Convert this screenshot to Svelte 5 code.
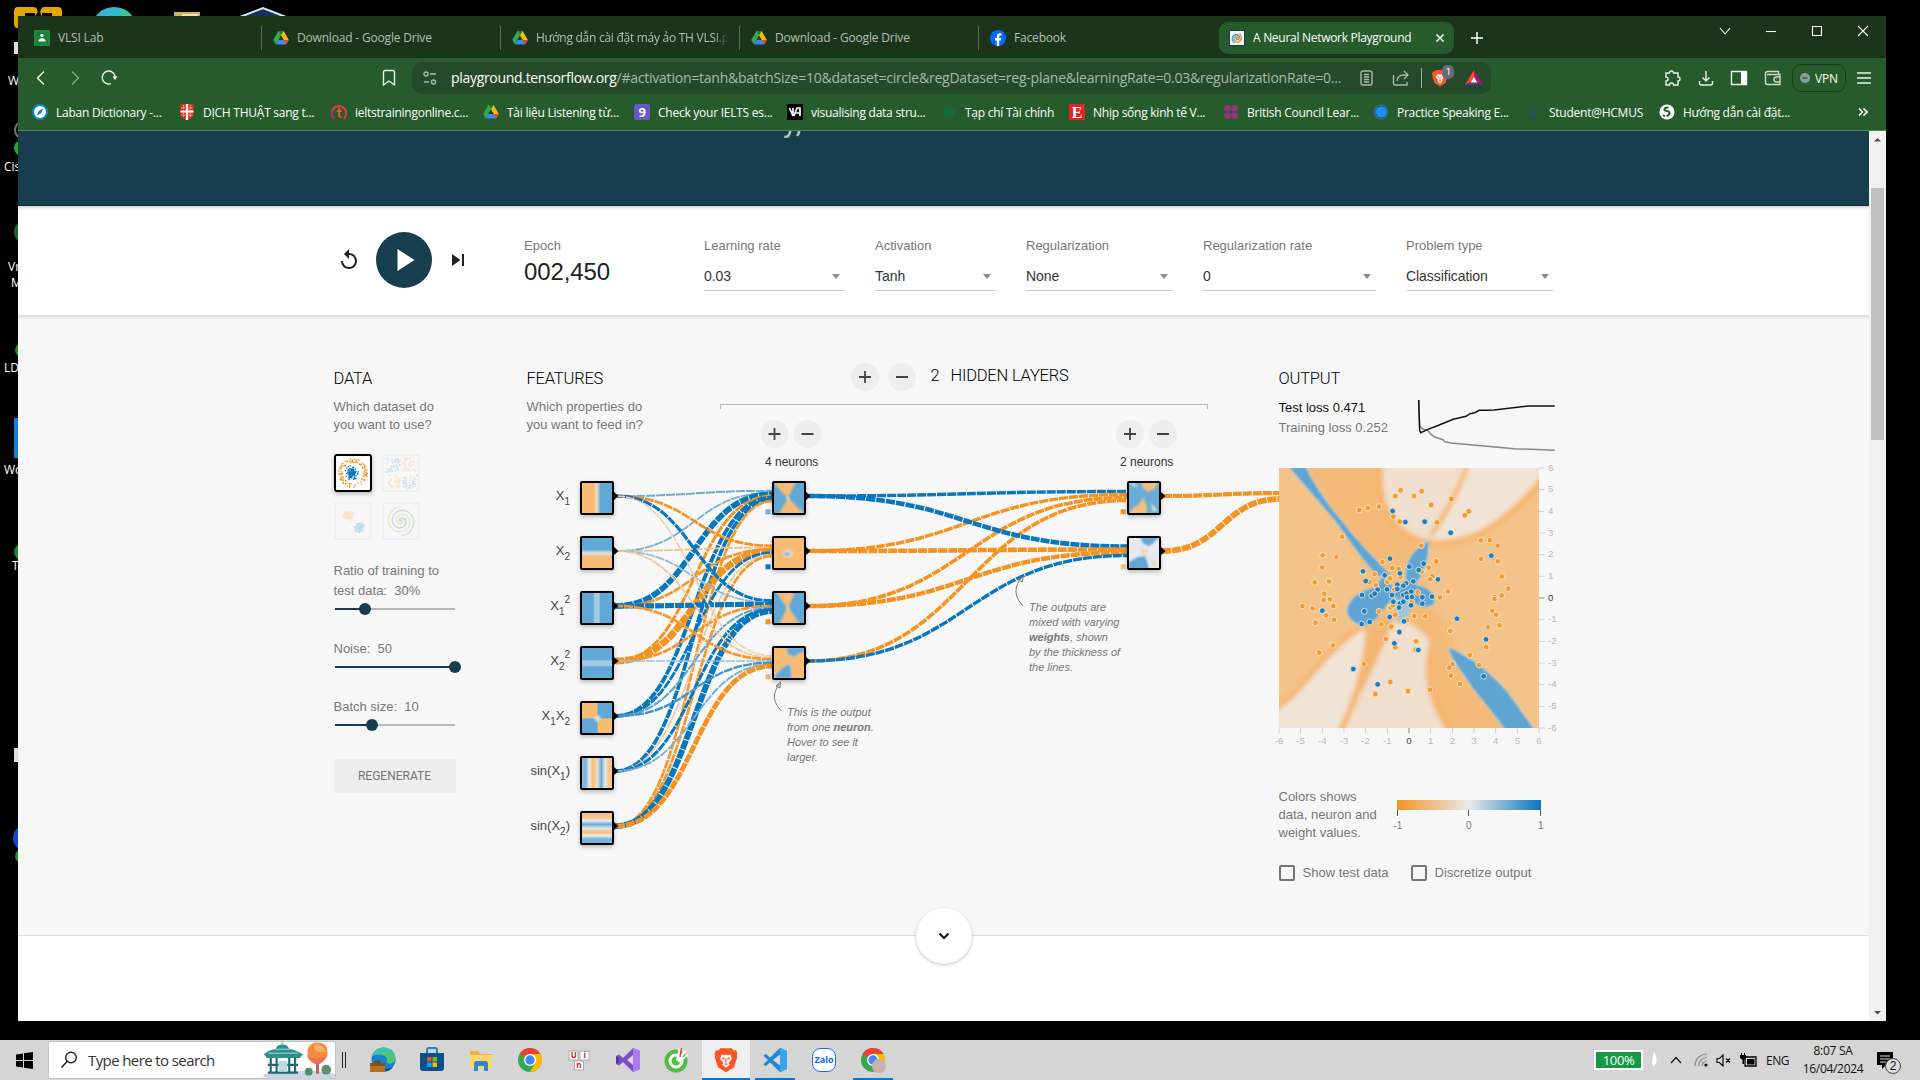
<script>
  function random(seed) {
    let s = seed;
    return () => {
      s = (s * 16807) % 2147483647;
      return s / 2147483647;
    };
  }

  const query =
    '/#activation=tanh&batchSize=10&dataset=circle&regDataset=reg-plane&learningRate=0.03&regularizationRate=0...';

  const tabs = [
    { icon: 'classroom', label: 'VLSI Lab' },
    { icon: 'drive', label: 'Download - Google Drive' },
    { icon: 'drive', label: 'Hướng dẫn cài đặt máy ảo TH VLSI.p', fade: true },
    { icon: 'drive', label: 'Download - Google Drive' },
    { icon: 'facebook', label: 'Facebook' }
  ];

  const bookmarks = [
    { icon: 'laban', label: 'Laban Dictionary -...', width: 147 },
    { icon: 'crest', label: 'DỊCH THUẬT sang t...', width: 152 },
    { icon: 'ielts', label: 'ieltstrainingonline.c...', width: 152 },
    { icon: 'drive', label: 'Tài liệu Listening từ...', width: 151 },
    { icon: 'nine', label: 'Check your IELTS es...', width: 153 },
    { icon: 'va', label: 'visualising data stru...', width: 154 },
    { icon: 'leaf', label: 'Tạp chí Tài chính', width: 128 },
    { icon: 'letterE', label: 'Nhịp sống kinh tế V...', width: 154 },
    { icon: 'council', label: 'British Council Lear...', width: 150 },
    { icon: 'swirl', label: 'Practice Speaking E...', width: 152 },
    { icon: 'student', label: 'Student@HCMUS', width: 134 },
    { icon: 'globe', label: 'Hướng dẫn cài đặt...', width: 140 }
  ];

  const selects = [
    { label: 'Learning rate', value: '0.03', width: 141 },
    { label: 'Activation', value: 'Tanh', width: 121 },
    { label: 'Regularization', value: 'None', width: 147 },
    { label: 'Regularization rate', value: '0', width: 173 },
    { label: 'Problem type', value: 'Classification', width: 148 }
  ];

  // Dataset thumbnails
  const ORANGE = '#f59322';
  const BLUE = '#0877bd';
  const r = random(77);
  const gauss = () => (r() + r() + r() + r() - 2) * 1.2;
  const thumbs = { circle: [], xor: [], gauss: [], spiral: [] };
  for (let i = 0; i < 110; i++) {
    const a = r() * Math.PI * 2;
    const d = 10.5 + r() * 4;
    thumbs.circle.push([19 + d * Math.cos(a), 19 + d * Math.sin(a), ORANGE]);
    thumbs.circle.push([18.5 + gauss() * 4, 19 + gauss() * 4, BLUE]);
  }
  for (let i = 0; i < 190; i++) {
    const x = r() * 14, y = r() * 14, q = i % 4;
    const cx = q % 2, cy = q > 1 ? 1 : 0;
    thumbs.xor.push([4 + x + cx * 17, 4 + y + cy * 17, cx === cy ? BLUE : ORANGE]);
    thumbs.gauss.push([14 + gauss() * 3, 13.5 + gauss() * 2.7, ORANGE]);
    thumbs.gauss.push([25 + gauss() * 3, 25.5 + gauss() * 3, BLUE]);
  }
  for (let i = 0; i < 150; i++) {
    const t = (i / 150) * 11;
    const d = 0.6 + (i / 150) * 14;
    thumbs.spiral.push([19 + d * Math.cos(t), 19 + d * Math.sin(t), ORANGE]);
    thumbs.spiral.push([19 - d * Math.cos(t), 19 - d * Math.sin(t), BLUE]);
  }

  // Network
  const rowY = (i) => 496 + 55 * i;
  const mix = (a, b, t) => Math.round(a + (b - a) * t);
  function weightColor(w) {
    const t = Math.min(1, Math.abs(w));
    const end = w < 0 ? [245, 147, 34] : [8, 119, 189];
    return `rgb(${mix(232, end[0], t)},${mix(234, end[1], t)},${mix(235, end[2], t)})`;
  }
  const weights1 = [
    [0.55, 0.5, 2.6, -1.1, 1.6, 1.5, -0.95],
    [-1, -0.45, -0.95, -3.2, 1, -0.4, -0.95],
    [1.2, 0.4, 2.3, -0.95, 0.6, 1.1, 2.7],
    [-0.3, -0.4, -0.95, 0.35, 0.75, 0.5, -2.1]
  ];
  const weights2 = [
    [1.35, -1.35, -1.45, -1.45],
    [2, -2, -1.9, 1.3]
  ];
  const links = [];
  function addLinks(matrix, x0, x1) {
    matrix.forEach((row, j) =>
      row.forEach((w, i) => {
        const y0 = rowY(i);
        const y1 = rowY(j) + ((i - (row.length - 1) / 2) / row.length) * 12;
        const xm = (x0 + x1) / 2;
        links.push({
          d: `M${x0},${y0}C${xm},${y0} ${xm},${y1} ${x1},${y1}`,
          color: weightColor(w),
          width: 1 + 1.8 * Math.abs(w)
        });
      })
    );
  }
  addLinks(weights1, 616, 772);
  addLinks(weights2, 808, 1127);
  addLinks([[-1.8, -2.7]], 1163, 1281);

  // Label runs: [text, vertical shift, small]
  const features = [
    [['X', 0, 0], ['1', 5, 1]],
    [['X', 0, 0], ['2', 5, 1]],
    [['X', 0, 0], ['1', 5, 1], ['2', -12, 1]],
    [['X', 0, 0], ['2', 5, 1], ['2', -12, 1]],
    [['X', 0, 0], ['1', 5, 1], ['X', -5, 0], ['2', 5, 1]],
    [['sin(X', 0, 0], ['1', 5, 1], [')', -5, 0]],
    [['sin(X', 0, 0], ['2', 5, 1], [')', -5, 0]]
  ];
  const biases = [
    [765.5, 0, '#7bb1d8'], [765.5, 1, BLUE], [765.5, 2, ORANGE], [765.5, 3, '#f1b36e'],
    [1120.7, 0, ORANGE], [1120.7, 1, '#eec08c']
  ];
  const buttons = [[774.5, 434], [1130, 434]];

  // Output heatmap: coordinates in thirds of a pixel
  const orangeDots = [
    [422,301],[406,318],[462,318],[485,304],[574,327],[298,360],[324,354],[357,350],[513,345],[626,364],
    [615,376],[400,380],[419,395],[531,397],[246,440],[484,467],[662,451],[690,451],[713,467],[188,496],
    [229,501],[663,507],[714,514],[367,516],[529,514],[187,533],[397,534],[416,537],[506,533],[344,552],
    [485,545],[518,558],[725,559],[164,577],[207,574],[328,576],[382,575],[390,565],[421,560],[348,586],
    [510,568],[403,599],[745,596],[193,611],[564,604],[725,616],[703,621],[191,630],[210,628],[703,627],
    [473,607],[540,622],[127,648],[158,655],[220,648],[392,653],[399,646],[357,664],[697,663],[708,674],
    [198,676],[222,689],[406,674],[463,678],[496,679],[166,698],[364,703],[441,690],[718,706],[684,711],
    [394,710],[571,723],[378,747],[468,754],[219,766],[406,772],[467,779],[178,788],[679,771],[629,795],
    [312,822],[578,822],[568,833],[657,825],[573,857],[600,882],[391,876],[346,912],[444,903],[510,899],[455,636]
  ];
  const blueDots = [
    [398,363],[436,396],[494,395],[572,428],[694,497],[390,506],[309,544],[448,530],[491,521],[476,540],
    [374,556],[420,550],[534,568],[317,573],[460,574],[412,584],[438,580],[353,599],[381,598],[412,597],
    [430,587],[306,615],[335,617],[344,611],[396,615],[430,615],[440,611],[454,605],[442,622],[456,621],
    [487,622],[516,620],[400,635],[420,640],[430,635],[487,641],[187,662],[313,664],[417,653],[453,646],
    [389,681],[432,694],[305,702],[329,696],[591,686],[418,726],[678,748],[403,760],[475,780],[280,837],
    [671,859],[353,883]
  ];
  const ticks = Array.from({ length: 13 }, (_, i) => i - 6);
</script>

{#snippet icon(name, size = 16)}
  <svg class="icon" width={size} height={size} viewBox="0 0 16 16">
    {#if name === 'classroom'}
      <rect width="16" height="16" rx="1.5" fill="#1e8e3e" /><rect x="1.5" y="1.5" width="13" height="13" fill="#188038" />
      <circle cx="8" cy="5.5" r="1.7" fill="#fff" /><path d="M4.3 11.6c0-2 1.6-3.4 3.7-3.4s3.7 1.4 3.7 3.4z" fill="#fff" />
    {:else if name === 'drive'}
      <path d="M5.4 1h5.2L8 5.5 3 14.4.2 9.9z" fill="#34a853" /><path d="M5.4 1h5.2l5.2 8.9h-5.3z" fill="#fbbc04" />
      <path d="M3 14.5l2.6-4.6h10.2L13 14.5z" fill="#4285f4" /><path d="M10.5 9.9h5.3L13 14.5z" fill="#ea4335" />
      <path d="M8 5.5L10.6 9.9H5.5z" fill="#1f4523" /><path d="M5.4 1h5.2L8 5.5z" fill="#188038" />
    {:else if name === 'facebook'}
      <circle cx="8" cy="8" r="8" fill="#0866ff" /><path d="M6.8 16v-5.4H5V8h1.8V6.6c0-2.3 1.2-3.4 3.2-3.4.6 0 1 .1 1.4.2v2.2h-1c-1 0-1.2.5-1.2 1.2V8h2.1l-.4 2.6H9.2V16z" fill="#fff" />
    {:else if name === 'nn'}
      <rect width="16" height="16" fill="#183d4e" /><rect x="1" y="1" width="14" height="14" fill="#f2f5f7" />
      <path d="M8.5 8.5c.8-1.5-1-2.5-2.3-1.3C4 9.5 6.5 13 9.8 11.8 13 10.5 13 6 10.5 3.8" fill="none" stroke="#f59322" stroke-width="1.5" />
      <path d="M7.5 8c-.5 1.5 1.5 2 2.500.5C11.200 6.500 9 4 6.500 4.800 2.500 6 2.500 11 5.500 13" fill="none" stroke="#4a9fd4" stroke-width="1.5" />
    {:else if name === 'laban'}
      <circle cx="8" cy="8" r="8" fill="#0a86c4" /><circle cx="8" cy="8" r="6" fill="#fff" /><path d="M11 4.5L9.2 9.2 5 11.5 6.8 6.8z" fill="#0a86c4" />
    {:else if name === 'crest'}
      <path d="M1.5 0h13v10c0 3-3 5-6.5 6-3.5-1-6.5-3-6.5-6z" fill="#d6322b" /><path d="M8 0v16M1.5 7.5h13" stroke="#fff" stroke-width="2.2" />
      <path d="M4.5 1v12M11.5 1v12M2 3.8h12M2 11h12" stroke="#f0c9a0" stroke-width="0.9" stroke-dasharray="1.5 1" />
    {:else if name === 'ielts'}
      <path d="M3 14.5A7.2 7.2 0 1 1 13 14.5" fill="none" stroke="#e8344a" stroke-width="2" />
      <path d="M3 14.5A7.2 7.2 0 0 1 1 7" fill="none" stroke="#b61f8c" stroke-width="2" />
      <path d="M8.2 4v7.5c0 2 1.5 2 2.2 1.5M5.8 7h4.7" fill="none" stroke="#f04a3a" stroke-width="2" />
    {:else if name === 'nine'}
      <rect width="16" height="16" rx="2" fill="#6559c8" /><text x="8" y="12.5" text-anchor="middle" font-size="13" font-weight="700" fill="#fff">9</text>
    {:else if name === 'va'}
      <rect width="16" height="16" fill="#000" /><path d="M2.5 4l3.5 8V4M7 12l3-8h3v8M9 9h4" fill="none" stroke="#fff" stroke-width="1.7" />
    {:else if name === 'leaf'}
      <circle cx="8" cy="8" r="6" fill="#1f6531" /><circle cx="8" cy="8" r="4" fill="#126c3c" />
    {:else if name === 'letterE'}
      <rect width="16" height="16" fill="#ee1c25" /><text x="8" y="13.5" text-anchor="middle" font-size="16" font-weight="700" font-family="Liberation Serif, serif" fill="#fff">E</text>
    {:else if name === 'council'}
      <g fill="#92357c"><circle cx="4.5" cy="4.5" r="3.3" /><circle cx="11.5" cy="4.5" r="3.3" /><circle cx="4.5" cy="11.5" r="3.3" /><circle cx="11.5" cy="11.5" r="3.3" /></g>
    {:else if name === 'swirl'}
      <circle cx="8" cy="8" r="7" fill="none" stroke="#2879b8" stroke-width="1" /><circle cx="8.3" cy="8" r="5.6" fill="#1e90f5" /><path d="M3 4a7 7 0 0 0 2 9" stroke="#2a64a8" stroke-width="1.6" fill="none" />
    {:else if name === 'student'}
      <circle cx="8" cy="8" r="6.5" fill="none" stroke="#24543f" stroke-width="1" /><path d="M8 3l1 4v3l2 3H5l2-3V7z" fill="#2c4d7c" />
    {:else if name === 'globe'}
      <circle cx="8" cy="8" r="7.6" fill="#fff" /><path d="M9.5 3.5c-3-.5-4.5 1-4 2.500.5 1 4.500.5 5 2.500.3 1.500-1 3-3 3.500M4 11l2 1.500" fill="none" stroke="#265c2b" stroke-width="2" />
    {:else if name === 'brave'}
      <path d="M4.5.8h7l1.2 1.3 1.5-.1.9 2-.5 1.3.3 1-1.9 6.2L8 15.5 3 12.5 1.1 6.3l.3-1L.9 4l.9-2 1.5.1z" fill="#fb542b" />
      <path d="M8 12.8l-2.3-1.9.7-1.2-2-2.3.9-2.8 1.7.4 1-.4 1 .4 1.7-.4.9 2.8-2 2.3.7 1.2z" fill="#fff" /><path d="M5.7 6.7l1.5.8M10.3 6.7l-1.5.8M8 7.2v2.5M7 10.5h2" stroke="#fb542b" stroke-width="0.8" />
    {:else if name === 'chrome'}
      <circle cx="8" cy="8" r="8" fill="#34a853" /><path d="M8 8L1.07 4A8 8 0 0 1 14.93 4z" fill="#ea4335" /><path d="M8 4h6.93A8 8 0 0 1 8 16l3.5-6z" fill="#fbbc04" />
      <circle cx="8" cy="8" r="4" fill="#fff" /><circle cx="8" cy="8" r="3.1" fill="#4285f4" />
    {/if}
  </svg>
{/snippet}

<div class="desktop">
  <svg class="desktop-icons" width="300" height="1040" viewBox="0 0 300 1040">
    <path d="M18 7h14a4 4 0 0 1 2 9H22v12h-4a4 4 0 0 1-4-4V11a4 4 0 0 1 4-4zM45 7h13a4 4 0 0 1 4 4v6H43a6 6 0 0 1 0-10z" fill="#e3a600" />
    <path d="M25 16v-3h10v3zM42 16v-3h10v3z" fill="#000" />
    <circle cx="114" cy="30" r="23" fill="#35b8cf" /><path d="M120 8a23 23 0 0 1 17 22h-17z" fill="#3bc79c" />
    <path d="M174 12h26v6h-26z" fill="#d3b15c" /><path d="M182 14h16v4h-16z" fill="#f3e1b0" />
    <path d="M240 17l23-9 23 9v8h-46z" fill="#18305d" stroke="#dce6f2" stroke-width="2" />
    <path d="M14 42h4v12h-4zM14 748h4v14h-4z" fill="#ddd" />
    <circle cx="22" cy="148" r="8" fill="#2ea321" /><circle cx="24" cy="130" r="9" fill="none" stroke="#777" stroke-width="2" />
    <circle cx="26" cy="232" r="12" fill="#17662a" /><circle cx="22" cy="350" r="7" fill="#1d8c28" />
    <path d="M14 418h5v40h-5z" fill="#1681d2" /><circle cx="22" cy="552" r="8" fill="#1a8d23" />
    <circle cx="26" cy="838" r="13" fill="#1548c8" /><circle cx="22" cy="856" r="7" fill="#1c8d23" />
    <g font-size="12" fill="#fff"><text x="8" y="85">W</text><text x="4" y="171">Cis</text><text x="8" y="271">Vr</text><text x="11" y="287">M</text><text x="4" y="372">LD</text><text x="4" y="474">Wo</text><text x="12" y="570">T</text></g>
  </svg>

  <div class="window">
    <div class="tabs">
      {#each tabs as tab}
        <div class="tab">{@render icon(tab.icon)}<span class:fade={tab.fade}>{tab.label}</span></div>
      {/each}
      <div class="tab active">{@render icon('nn')}<span>A Neural Network Playground</span>
        <svg class="close" width="10" height="10" viewBox="0 0 10 10"><path d="M1.5 1.5l7 7M8.5 1.5l-7 7" /></svg>
      </div>
      <svg class="new-tab" width="14" height="14" viewBox="0 0 14 14"><path d="M7 1v12M1 7h12" /></svg>
      <div class="controls">
        <svg width="12" height="12" viewBox="0 0 12 12"><path d="M1 3l5 6 5-6" /></svg>
        <svg width="12" height="12" viewBox="0 0 12 12"><path d="M1 6.5h10" /></svg>
        <svg width="12" height="12" viewBox="0 0 12 12"><path d="M1.5 1.5h9v9h-9z" /></svg>
        <svg width="12" height="12" viewBox="0 0 12 12"><path d="M1 1l10 10M11 1L1 11" /></svg>
      </div>
    </div>

    <div class="toolbar">
      <svg class="nav" width="12" height="16" viewBox="0 0 12 16"><path d="M9 1.5L2.5 8 9 14.5" /></svg>
      <svg class="nav dim" width="12" height="16" viewBox="0 0 12 16"><path d="M3 1.5L9.5 8 3 14.5" /></svg>
      <svg class="nav" width="18" height="18" viewBox="0 0 18 18"><path d="M11 14.6A6.5 6.5 0 1 1 15.2 9" /><path d="M12.5 7.5h5L15 11z" class="solid" /></svg>
      <svg class="nav mark" width="14" height="18" viewBox="0 0 14 18"><path d="M1.5 3a1.5 1.5 0 0 1 1.5-1.5h8A1.5 1.5 0 0 1 12.5 3v13L7 12l-5.5 4z" /></svg>
      <div class="url">
        <svg width="14" height="14" viewBox="0 0 14 14"><circle cx="3" cy="3" r="2" /><path d="M7 3h6M1 11h5" /><circle cx="10.5" cy="11" r="2" /></svg>
        <span class="address"><b>playground.tensorflow.org</b>{query}</span>
        <svg width="14" height="16" viewBox="0 0 14 16"><rect x="1" y="1" width="11" height="14" rx="2" /><path d="M4 4.5h5M4 7h5M4 9.5h5M4 12h5" /></svg>
        <svg class="share" width="18" height="16" viewBox="0 0 18 16"><path d="M1.5 5v8.5a1.5 1.5 0 0 0 1.5 1.5h12v-3M5 11c.5-4 3-6 6.500-6H16M12 1l4 4-4 4" /></svg>
        <i class="split"></i>
        <span class="shield">{@render icon('brave', 18)}<em>1</em></span>
        <svg class="bat" width="18" height="16" viewBox="0 0 18 16"><path d="M9 0L0 15h5l4-7z" fill="#ff4724" /><path d="M9 0l9 15h-4L9 8z" fill="#9e1f63" /><path d="M0 15h18l-4-3H5z" fill="#662d91" /><path d="M9 7l3.2 5.4H5.8z" fill="#fff" /></svg>
      </div>
      <div class="tools">
        <svg width="18" height="18" viewBox="0 0 18 18"><path d="M2 4h3.5a2 2 0 1 1 4 0h4.5v4a2 2 0 1 1 0 4v4h-4.5a2 2 0 0 0-4 0H2v-4a2 2 0 0 0 0-4z" /></svg>
        <svg width="16" height="16" viewBox="0 0 16 16"><path d="M8 1v10M4.5 7.5L8 11l3.5-3.5M1.5 11v2a2 2 0 0 0 2 2h9a2 2 0 0 0 2-2v-2" /></svg>
        <svg width="18" height="16" viewBox="0 0 18 16"><path d="M1.5 1.5h15v13h-15z" /><path d="M11 1h5.5v14H11z" class="solid" /></svg>
        <svg width="18" height="16" viewBox="0 0 18 16"><path d="M1.5 3.5A2 2 0 0 1 3.5 1.5h11v2.7M1.5 3.5v9a2 2 0 0 0 2 2H16V4.5H3M16.5 7h-4a2.5 2.5 0 0 0 0 5h4M12.5 9.5h.5" /></svg>
        <div class="vpn"><svg width="10" height="10" viewBox="0 0 10 10"><circle cx="5" cy="5" r="5" fill="#8b9e9e" stroke="none" /><path d="M2.5 5h5" stroke="#265c2b" /></svg>VPN</div>
        <svg class="menu" width="14" height="14" viewBox="0 0 14 14"><path d="M0 2h14M0 7h14M0 12h14" /></svg>
      </div>
    </div>

    <div class="bookmarks">
      {#each bookmarks as b}
        <div class="bookmark" style:width="{b.width}px">{@render icon(b.icon)}<span>{b.label}</span></div>
      {/each}
      <svg class="more" width="10" height="8" viewBox="0 0 10 8"><path d="M1 .5L4.5 4 1 7.5M5.500.5L9 4 5.500 7.500" /></svg>
    </div>

    <div class="viewport">
      <div class="page">
        <header><span>y,</span></header>

        <div class="top-controls">
          <svg class="reset" width="24" height="24" viewBox="0 0 24 24"><path d="M12 5V1L7 6l5 5V7c3.31 0 6 2.69 6 6s-2.69 6-6 6-6-2.69-6-6H4c0 4.42 3.58 8 8 8s8-3.58 8-8-3.58-8-8-8z" /></svg>
          <svg class="play" width="56" height="56" viewBox="0 0 56 56"><circle cx="28" cy="28" r="28" fill="#183d4e" /><path d="M21.5 17v22l17-11z" fill="#fff" /></svg>
          <svg class="step" width="24" height="24" viewBox="0 0 24 24"><path d="M6 18l8.5-6L6 6v12zM16 6v12h2V6h-2z" /></svg>
          <div class="epoch"><span class="label">Epoch</span><strong>002,450</strong></div>
          {#each selects as s}
            <div class="select" style:width="{s.width}px"><span class="label">{s.label}</span><div class="value">{s.value}<i></i></div></div>
          {/each}
        </div>

        <main>
          <section class="data">
            <h4>DATA</h4>
            <p>Which dataset do<br />you want to use?</p>
            <div class="thumbs">
              {#each Object.entries(thumbs) as [name, points]}
                <svg class="thumb" class:selected={name === 'circle'} width="38" height="38" viewBox="0 0 38 38">
                  {#each points as [x, y, c]}<rect x={x - 0.6} y={y - 0.6} width="1.3" height="1.3" fill={c} />{/each}
                </svg>
              {/each}
            </div>
            <div class="param"><span>Ratio of training to<br />test data:&nbsp; 30%</span><div class="slider"><i style:width="30px"></i></div></div>
            <div class="param"><span>Noise:&nbsp; 50</span><div class="slider"><i style:width="120px"></i></div></div>
            <div class="param"><span>Batch size:&nbsp; 10</span><div class="slider"><i style:width="37px"></i></div></div>
            <button>REGENERATE</button>
          </section>

          <section class="network">
            <div class="features"><h4>FEATURES</h4><p>Which properties do<br />you want to feed in?</p></div>
            <div class="hidden">
              <div class="layers">
                <svg width="66" height="28" viewBox="0 0 66 28"><circle cx="14" cy="14" r="14" fill="#eee" /><circle cx="51" cy="14" r="14" fill="#eee" /><path d="M14 8v12M8 14h12M45 14h12" stroke="#444" stroke-width="1.8" /></svg>
                <h4><span>2</span>HIDDEN LAYERS</h4>
              </div>
              <div class="bracket"></div>
            </div>
            <svg class="graph" width="752" height="621" viewBox="527 315 752 621">
              <defs>
                <filter id="soft" x="-20%" y="-20%" width="140%" height="140%"><feGaussianBlur stdDeviation="0.8" /></filter>
                <filter id="drop" x="-30%" y="-30%" width="160%" height="180%"><feDropShadow dx="0" dy="2" stdDeviation="2" flood-opacity="0.25" /></filter>
                <clipPath id="cell"><rect width="30" height="30" /></clipPath>
                <linearGradient id="gx"><stop offset="0.38" stop-color="#f8bb74" /><stop offset="0.5" stop-color="#ecdcca" /><stop offset="0.62" stop-color="#62a8d6" /></linearGradient>
                <linearGradient id="gy" x2="0" y2="1"><stop offset="0.38" stop-color="#62a8d6" /><stop offset="0.5" stop-color="#dde4e8" /><stop offset="0.62" stop-color="#f8bb74" /></linearGradient>
                <linearGradient id="gx2"><stop offset="0.36" stop-color="#62a8d6" /><stop offset="0.43" stop-color="#a5cbe3" /><stop offset="0.55" stop-color="#a5cbe3" /><stop offset="0.62" stop-color="#62a8d6" /></linearGradient>
                <linearGradient id="gy2" x2="0" y2="1"><stop offset="0.38" stop-color="#62a8d6" /><stop offset="0.45" stop-color="#a5cbe3" /><stop offset="0.57" stop-color="#a5cbe3" /><stop offset="0.64" stop-color="#62a8d6" /></linearGradient>
                <linearGradient id="sx"><stop offset="0" stop-color="#8fbfdf" /><stop offset="0.13" stop-color="#78b3da" /><stop offset="0.24" stop-color="#eceae8" /><stop offset="0.36" stop-color="#f8bb74" /><stop offset="0.51" stop-color="#efdcc5" /><stop offset="0.65" stop-color="#6aacd8" /><stop offset="0.77" stop-color="#e8eaeb" /><stop offset="0.87" stop-color="#f4c894" /><stop offset="1" stop-color="#f4c289" /></linearGradient>
                <linearGradient id="sy" x2="0" y2="1"><stop offset="0" stop-color="#f4c289" /><stop offset="0.14" stop-color="#f4c289" /><stop offset="0.26" stop-color="#e8eaeb" /><stop offset="0.38" stop-color="#6aacd8" /><stop offset="0.51" stop-color="#e5e8ea" /><stop offset="0.64" stop-color="#f8bb74" /><stop offset="0.76" stop-color="#eceae8" /><stop offset="0.87" stop-color="#78b3da" /><stop offset="1" stop-color="#78b3da" /></linearGradient>
              </defs>

              {#each buttons as [x, y]}
                <circle cx={x} cy={y} r="14" fill="#eee" /><circle cx={x + 33} cy={y} r="14" fill="#eee" />
                <path d="M{x} {y - 6}v12M{x - 6} {y}h12M{x + 27} {y}h12" stroke="#444" stroke-width="1.8" />
              {/each}
              <text x="765" y="466" class="count">4 neurons</text>
              <text x="1120" y="466" class="count">2 neurons</text>

              {#each links as l, i}<path d={l.d} fill="none" stroke={l.color} stroke-width={l.width} stroke-dasharray="9 1" stroke-dashoffset={i % 3} />{/each}
              {#each biases as [x, row, c]}<rect {x} y={509.3 + row * 55} width="5" height="5" fill={c} />{/each}

              {#each features as runs, i}
                <text x="570" y={499.5 + i * 55} class="feature">{#each runs as [t, dy, small]}<tspan class:small={small} {dy}>{t}</tspan>{/each}</text>
              {/each}

              {#snippet node(x, row, kind)}
                <g transform="translate({x},{481 + row * 55})">
                  <path d="M34 11l4.5 4-4.5 4z" />
                  <rect width="34" height="34" rx="2" fill="#000" filter="url(#drop)" />
                  <g transform="translate(2,2)" clip-path="url(#cell)">
                    {#if kind.startsWith('#')}
                      <rect width="30" height="30" fill="url({kind})" />
                    {:else if kind === 'xy'}
                      <rect width="30" height="30" fill="#f8bb74" /><path d="M15.5 0H30v15.5H15.5zM0 15.5h15.5V30H0z" fill="#62a8d6" /><circle cx="15.5" cy="15.5" r="3" fill="#dfe0df" filter="url(#soft)" />
                    {:else if kind === 'a0'}
                      <rect width="30" height="30" fill="#62a8d6" /><g filter="url(#soft)"><path d="M-1-1h23l-7.5 15-2 0zM13 17l3 0L31 31H5z" fill="#f8bb74" /><circle cx="14" cy="15.5" r="1.7" fill="#dfe6ea" /></g>
                    {:else if kind === 'a1'}
                      <rect width="30" height="30" fill="#f8bb74" /><g filter="url(#soft)"><ellipse cx="14" cy="15.5" rx="5" ry="3.8" fill="#e4dfd8" /><ellipse cx="13" cy="16" rx="3" ry="1.3" fill="#4f9dd0" /></g>
                    {:else if kind === 'a2'}
                      <rect width="30" height="30" fill="#62a8d6" /><g filter="url(#soft)"><path d="M2-1h19l-6.5 15-2 0zM12.5 16l3 0L26 31H5z" fill="#f8bb74" /><circle cx="14" cy="15" r="1.5" fill="#dfe6ea" /></g>
                    {:else if kind === 'a3'}
                      <rect width="30" height="30" fill="#f8bb74" /><g filter="url(#soft)" fill="#62a8d6" stroke="#e9d8c2" stroke-width="0.8"><path d="M11-1h21v4l-7 3-5 3-6-2z" /><path d="M-1 31v-2l8-8 6-5 4 2 1 13z" /></g>
                    {:else if kind === 'b0'}
                      <rect width="30" height="30" fill="#6aacd8" /><g filter="url(#soft)"><path d="M-1-1h7l3 6-5-2z" fill="#b8d4e6" /><path d="M12-1h18l-6 8-5 2-5-4zM0 31l4-6 7-5 3-6 4 10v7z" fill="#f5bf80" /><path d="M22 20l6 7-4 2z" fill="#e5e6e6" /></g>
                    {:else}
                      <rect width="30" height="30" fill="#e6eaee" /><g filter="url(#soft)"><path d="M11-1h19l-6 6-4 3-5-2zM-1 31l1-7 9-5 7-1 2 5 2 9z" fill="#5fa6d5" /><path d="M10 7l5 5 5-1-3 5-5 2 1-4zM22 20l6 7-4 2z" fill="#f0d5b5" /></g>
                    {/if}
                  </g>
                </g>
              {/snippet}
              {#each ['#gx', '#gy', '#gx2', '#gy2', 'xy', '#sx', '#sy'] as kind, i}{@render node(580, i, kind)}{/each}
              {#each ['a0', 'a1', 'a2', 'a3'] as kind, i}{@render node(772, i, kind)}{/each}
              {#each ['b0', 'b1'] as kind, i}{@render node(1127, i, kind)}{/each}

              <g class="callout">
                <path d="M781.5 711C772 701 773 694 779 684M776 686l4.500-4-.500 6z" />
                <text x="787" y="716">This is the output</text><text x="787" y="731">from one <tspan class="strong">neuron</tspan>.</text><text x="787" y="746">Hover to see it</text><text x="787" y="761">larger.</text>
                <path d="M1023 606C1014 596 1014 588 1021 578M1018.5 580l4.500-4-.500 6z" />
                <text x="1029" y="611">The outputs are</text><text x="1029" y="626">mixed with varying</text><text x="1029" y="641"><tspan class="strong">weights</tspan>, shown</text><text x="1029" y="656">by the thickness of</text><text x="1029" y="671">the lines.</text>
              </g>
            </svg>
          </section>

          <section class="output">
            <h4>OUTPUT</h4>
            <div class="loss">
              <div><span class="test">Test loss 0.471</span><span>Training loss 0.252</span></div>
              <svg width="138" height="54" viewBox="469 30 414 162" fill="none" stroke-width="4.5">
                <path d="M474 30l3 79 10 8 14 4 10 12 12 8 24 8 4 6 20 4 100 9 90 8 121 5" stroke="#888" />
                <path d="M474 30l3 92 3 6 22-10 26-10 50-20 38-9 12-8 14-3 14-7h24l20-1 70-8 36-4h76" stroke="#111" />
              </svg>
            </div>
            <svg class="heatmap" width="290" height="280" viewBox="57 234 870 840">
              <defs>
                <clipPath id="plot"><rect x="57" y="234" width="780" height="780" /></clipPath>
                <filter id="blur" x="-10%" y="-10%" width="120%" height="120%"><feGaussianBlur stdDeviation="6" /></filter>
                <filter id="fine" x="-10%" y="-10%" width="120%" height="120%"><feGaussianBlur stdDeviation="3" /></filter>
              </defs>
              <g clip-path="url(#plot)">
                <rect x="57" y="234" width="780" height="780" fill="#f4c389" />
                <g filter="url(#blur)">
                  <path d="M120 224H380L390 380 500 460 480 520 520 640 560 700 600 800 760 1024H560L500 900 440 690 300 700 330 560z" fill="#f4bb78" />
                  <g fill="none" stroke="#f5b772" stroke-width="28">
                    <path d="M360 224C350 340 385 425 500 456 640 480 760 370 850 262" />
                    <path d="M40 965C140 910 190 780 320 706" />
                    <path d="M518 745C482 870 520 940 572 1024" />
                  </g>
                  <path d="M370 214C362 340 392 415 500 448 640 468 755 365 850 250V214z" fill="#efdfcc" />
                  <path d="M622 214L512 440C640 470 755 365 850 250V214z" fill="#f1e4d6" />
                  <path d="M40 970C140 915 190 790 325 712 400 680 470 690 510 755 476 880 516 940 562 1034H40z" fill="#efdfcc" />
                  <path d="M40 972C140 912 190 790 322 712L310 800 228 1034H40z" fill="#f1e4d6" />
                  <path d="M318 690L404 680C370 790 290 920 250 1034H226C285 920 314 812 318 690z" fill="#f4b673" />
                  <path d="M616 224h15C600 310 565 375 520 440l-14-4C560 350 590 290 616 224z" fill="#f5b977" />
                </g>
                <g filter="url(#fine)" stroke="#e3dcd0" stroke-width="2.5" fill="#5ea5d4">
                  <path d="M80 224h56C160 280 205 345 252 400 305 468 350 510 398 560L352 558C306 510 268 452 232 402 185 345 140 295 80 224z" />
                  <path d="M564 770C625 795 695 848 745 908L828 1024H738C686 950 645 910 614 860 586 820 569 800 564 770z" />
                  <path d="M508 452C508 500 490 560 466 584 510 590 530 615 522 643 490 665 470 640 452 635 430 640 420 640 405 622 375 640 360 700 310 708 270 700 255 670 262 650 280 610 310 600 345 592L368 556 400 590 440 580C425 530 450 480 508 452z" />
                </g>
                <path d="M400 628h54l-10 62-28 12z" fill="#9fc5de" filter="url(#blur)" />
              </g>
              <g stroke="#f6ead8" stroke-width="2.5">
                {#each orangeDots as [x, y]}<circle cx={x} cy={y} r="8.7" fill="#f59a2e" />{/each}
                {#each blueDots as [x, y]}<circle cx={x} cy={y} r="8.7" fill="#1a7fc1" />{/each}
              </g>
              <g class="axis">
                {#each ticks as t}
                  <g class:zero={t === 0}>
                    <path d="M{447 + t * 65} 1014v16M837 {624 - t * 65}h16" />
                    <text x={447 + t * 65} y="1061" text-anchor="middle">{t}</text>
                    <text x="864" y={632 - t * 65}>{t}</text>
                  </g>
                {/each}
              </g>
            </svg>
            <div class="legend">
              <p>Colors shows<br />data, neuron and<br />weight values.</p>
              <div class="scale">
                <div class="bar"></div>
                <div class="marks"><i></i><i></i><i></i></div>
                <div class="numbers"><span>-1</span><span>0</span><span>1</span></div>
              </div>
            </div>
            <div class="checks"><i></i><span>Show test data</span><i></i><span>Discretize output</span></div>
          </section>
        </main>
        <div class="more-fab"><svg width="12" height="8" viewBox="0 0 12 8"><path d="M1.5 1.5L6 6l4.5-4.5" /></svg></div>
      </div>
      <div class="scrollbar"><svg width="17" height="17" viewBox="0 0 17 17"><path d="M5 10.5h7L8.5 7z" /></svg><i></i><svg width="17" height="17" viewBox="0 0 17 17"><path d="M5 7h7l-3.5 3.5z" /></svg></div>
    </div>
  </div>

  <div class="taskbar">
    <div class="start"><svg width="17" height="17" viewBox="0 0 17 17"><path d="M0 2.4L7 1.4V8H0zM8 1.2L17 0v8H8zM0 9h7v6.6L0 14.6zM8 9h9v8L8 15.8z" /></svg></div>
    <div class="search">
      <svg width="18" height="18" viewBox="0 0 18 18"><circle cx="11" cy="6.5" r="5.3" /><path d="M7.3 10.3L1.5 16.5" /></svg>
      <span>Type here to search</span>
      <svg class="art" width="74" height="38" viewBox="0 0 76 38">
        <ellipse cx="40" cy="35" rx="38" ry="5" fill="#ccd6e2" /><path d="M3 13C8 9 12 8 15 8c1-4 4-5 7-5s6 1 7 5c4 0 8 2 14 5l-3 4H6z" fill="#2f8f8d" /><path d="M8 12h30M22 0v4M15 8h14" stroke="#79c2bd" stroke-width="1.5" />
        <path d="M10 17v16M35 17v16M16 17v15M29 17v15M7 24h31M7 32h31" stroke="#1e6a76" stroke-width="2.2" /><path d="M18 20h9v11h-9z" fill="#b9dade" />
        <path d="M58 18v15" stroke="#c55f4d" stroke-width="3" /><path d="M58 1c7 0 11 4 10 9 2 6-4 12-10 14-6-2-12-6-10-12-1-6 3-11 10-11z" fill="#f58b3d" /><path d="M54 4c6-3 11 1 12 6-5 2-12 0-12-6z" fill="#f9b05f" /><path d="M50 16c6 2 12 2 17-1-1 4-5 7-9 9-4-2-7-4-8-8z" fill="#e56f62" />
        <circle cx="49" cy="31" r="4" fill="#4f9265" /><circle cx="67" cy="29" r="5" fill="#5a8f70" />
      </svg>
    </div>
    <i class="grip"></i>
    <div class="apps">
      <div><svg width="26" height="26" viewBox="0 0 26 26"><circle cx="13.5" cy="12.5" r="12" fill="#1683d0" /><path d="M2 9C6-3 25-2 25.5 11c0 6-7 7-9 4 3-7-7-9-14.500-6z" fill="#4fc96f" /><path d="M2 9C6 0 20 0 24 7 16 3 9 5 2 9z" fill="#37bdd6" /><path d="M9 14c0 6 6 10 14 6-4 6-12 6-16 1-2-4-1-6 2-7z" fill="#0c54a0" /><path d="M0 16h15v9H0z" fill="#b9701f" /><path d="M0 16h15v3H0z" fill="#8d5013" /><path d="M5 16v-2h5v2" fill="none" stroke="#704012" /></svg></div>
      <div><svg width="24" height="26" viewBox="0 0 24 26"><path d="M7 7V3a2 2 0 0 1 2-2h6a2 2 0 0 1 2 2v4" fill="none" stroke="#1389ce" stroke-width="2" /><path d="M0 6h24v15a3 3 0 0 1-3 3H3a3 3 0 0 1-3-3z" fill="#0d4f8e" /><path d="M7 10h4.5v4.5H7z" fill="#f25022" /><path d="M12.5 10H17v4.5h-4.5z" fill="#7fba00" /><path d="M7 15.5h4.5V20H7z" fill="#00a4ef" /><path d="M12.5 15.5H17V20h-4.5z" fill="#ffb900" /></svg></div>
      <div><svg width="22" height="22" viewBox="0 0 22 22"><path d="M0 2h8l2 3h12v14H0z" fill="#eeb03a" /><path d="M0 6h22v13H0z" fill="#fdd66b" /><path d="M4 22v-7a3 3 0 0 1 3-3h8a3 3 0 0 1 3 3v7h-4v-5H8v5z" fill="#2f86d1" /></svg></div>
      <div>{@render icon('chrome', 24)}</div>
      <div><svg width="22" height="22" viewBox="0 0 22 22" font-size="8" font-weight="700" fill="#c22"><g fill="#fff" stroke="#aaa"><path d="M1 2h9v9H1zM12 2h9v9h-9zM6.5 12h9v9h-9z" /></g><text x="2.7" y="9">U</text><text x="15.5" y="9">i</text><text x="8.3" y="19">n</text></svg></div>
      <div><svg width="24" height="24" viewBox="0 0 24 24"><path d="M17 0l7 3v18l-7 3L7 14l-4 3.5L0 16V8l3-1.5L7 10z" fill="#7b4fc9" /><path d="M17 7v10l-6-5z" fill="#d8d8d8" /><path d="M17 0l7 3v18l-7 3z" fill="#b179f1" /><path d="M0 8l3 2v4l-3 2z" fill="#5b3494" /></svg></div>
      <div><svg width="26" height="26" viewBox="0 0 26 26"><circle cx="12" cy="14" r="11.5" fill="#4fbf44" /><circle cx="12" cy="14" r="6" fill="none" stroke="#fff" stroke-width="3" /><path d="M13 13.500L16 2M14 14l7-10M14.500 15l9-7" stroke="#fff" stroke-width="2.200" /><path d="M16 10l1.500-9" stroke="#e4482f" stroke-width="1.500" /></svg></div>
      <div class="current running">{@render icon('brave', 26)}</div>
      <div class="running"><svg width="24" height="24" viewBox="0 0 24 24"><path d="M17 0l7 3v18l-7 3L7 14.5 3 18l-3-1.5L5 12 0 7.5 3 6l4 3.5z" fill="#1f8ad2" /><path d="M17 6.5v11L10 12z" fill="#d8d8d8" /><path d="M17 0l7 3v18l-7 3z" fill="#37a5ec" /></svg></div>
      <div><svg width="24" height="24" viewBox="0 0 24 24"><rect x="0.5" y="0.5" width="23" height="23" rx="8" fill="#fff" stroke="#1766e8" /><text x="12" y="15" text-anchor="middle" font-size="9" font-weight="700" fill="#0068ff">Zalo</text></svg></div>
      <div class="running"><span class="profile">{@render icon('chrome', 24)}<i></i></span></div>
    </div>
    <div class="tray">
      <span class="battery">100%</span>
      <svg class="flame" width="6" height="16" viewBox="0 0 6 16"><path d="M3 0c3 4 3 8 2 12l-3 3C0 10 2 5 3 0z" fill="#fff" /></svg>
      <svg width="12" height="8" viewBox="0 0 12 8" class="line up"><path d="M1 7l5-5.5L11 7" /></svg>
      <svg width="14" height="14" viewBox="0 0 14 14" class="line faint"><path d="M1 13A12 12 0 0 1 13 1M4.5 13A8.5 8.5 0 0 1 13 4.5M8 13a5 5 0 0 1 5-5" /><circle cx="12" cy="12" r="1.6" fill="#111" stroke="none" /></svg>
      <svg width="15" height="13" viewBox="0 0 15 13" class="line"><path d="M1 4.5h2.5L7 1v11L3.5 8.5H1zM10 4.5l4 4M14 4.5l-4 4" /></svg>
      <svg class="plug" width="17" height="14" viewBox="0 0 17 14"><path d="M5 4h11v9H5z" fill="none" stroke="#000" stroke-width="1.3" /><path d="M7 6h7.5v5.5H7zM0 2h1V0h1v2h2V0h1v2h1v3L4 7v4H2.5V7L0 5z" /></svg>
      <span class="lang">ENG</span>
      <div class="clock"><span>8:07 SA</span><span>16/04/2024</span></div>
      <span class="notice"><svg width="16" height="17" viewBox="0 0 16 17"><path d="M0 0h16v13H9l-4 4v-4H0z" /><path d="M3 4h10M3 7h10M3 10h6" stroke="#ddd" /></svg><em>2</em></span>
    </div>
  </div>
</div>

<style>
  :global(body) { margin: 0; overflow: hidden; }
  .desktop { position: relative; width: 1920px; height: 1080px; background: #000; overflow: hidden; display: flex; flex-direction: column; justify-content: flex-end; font-family: 'Open Sans', 'Noto Sans', sans-serif; }
  .desktop-icons { position: absolute; left: 0; top: 0; }
  .icon { flex: none; display: block; }
  .window { position: absolute; left: 18px; top: 16px; width: 1868px; height: 1005px; display: flex; flex-direction: column; background: #fff; }

  .tabs { height: 42px; background: #1b351b; display: flex; align-items: center; font-size: 12px; letter-spacing: -0.18px; color: #b3bfb3; padding-left: 5px; box-sizing: border-box; }
  .tab { width: 239px; height: 24px; margin-top: 1px; padding-left: 11px; box-sizing: border-box; display: flex; align-items: center; gap: 8px; border-right: 1px solid #577257; white-space: nowrap; overflow: hidden; flex: none; }
  .tab:nth-child(5) { border-right: 0; }
  .tab .fade { width: 193px; overflow: hidden; letter-spacing: -0.27px; mask-image: linear-gradient(90deg, #000 92%, transparent); }
  .tab.active { width: 235px; height: 32px; margin-left: 1px; margin-top: 1px; border: 0; border-radius: 9px; background: #265c2b; color: #fff; padding-left: 10px; letter-spacing: -0.29px; }
  .tab.active .close { margin-left: auto; margin-right: 9px; }
  .close path, .new-tab path { stroke: #fff; stroke-width: 1.7; }
  .new-tab { margin-left: 16px; margin-top: 2px; }
  .new-tab path { stroke-width: 1.5; }
  .controls { margin-left: auto; display: flex; gap: 34px; margin-right: 17px; margin-top: -12px; }
  .controls path { fill: none; stroke: #fff; stroke-width: 1.1; }

  .toolbar { height: 40px; background: #265c2b; display: flex; align-items: center; padding-left: 17px; }
  .toolbar svg { fill: none; stroke: #eef3ee; stroke-width: 1.4; flex: none; display: block; }
  .toolbar .nav { margin-right: 22px; }
  .toolbar .nav.dim { opacity: 0.5; }
  .toolbar .nav:nth-child(3) { margin-right: 0; margin-left: -3px; margin-top: -1px; }
  .toolbar .nav.mark { margin-left: 264px; margin-right: 16px; }
  .toolbar .solid { fill: #fff; stroke: none; }
  .url { width: 1079px; height: 32px; border-radius: 10px; background: #254a2a; display: flex; align-items: center; box-sizing: border-box; padding-left: 11px; font-size: 14px; color: #a8b8aa; }
  .url > svg { stroke: #a9b8aa; }
  .address { margin-left: 14px; margin-top: -1px; width: 909px; white-space: nowrap; letter-spacing: -0.23px; }
  .address b { font-weight: 400; color: #fff; letter-spacing: -0.31px; }
  .url .share { margin-left: 18px; }
  .split { width: 1px; height: 20px; background: #9fb0a0; margin: 0 10px 0 11px; }
  .shield { position: relative; margin-left: -1px; }
  .shield :global(svg) { stroke: none; }
  .shield em { position: absolute; right: -5px; top: -4px; background: #66697a; color: #fff; font: normal 9px/14px Inter, sans-serif; width: 12px; text-align: center; border-radius: 5px; }
  .url .bat { stroke: none; margin-left: 16px; }
  .tools { margin-left: auto; display: flex; align-items: center; padding-right: 15px; }
  .tools > svg { margin-right: 16px; }
  .tools > svg:nth-child(4) { margin-right: 9px; stroke: #cdd9cd; }
  .tools > svg:nth-child(-n + 4) { position: relative; left: -1px; }
  .vpn { width: 52px; height: 26px; border: 1px solid #193c1d; border-radius: 9px; display: flex; align-items: center; justify-content: center; gap: 5px; color: #fff; font-size: 12px; letter-spacing: -0.2px; margin-right: 11px; }
  .tools .menu { margin: 0; }

  .bookmarks { height: 32px; border-bottom: 1px solid #548356; background: #265c2b; display: flex; align-items: center; padding: 0 0 0 14px; color: #fff; font-size: 12px; letter-spacing: -0.25px; }
  .bookmark { display: flex; align-items: center; gap: 8px; white-space: nowrap; flex: none; height: 28px; margin-top: -4px; }
  .bookmarks .more { margin: -4px 18px 0 auto; fill: none; stroke: #fff; stroke-width: 1.6; }

  .viewport { height: 890px; display: flex; }
  .page { position: relative; width: 1851px; background: #fff; font-family: 'Liberation Sans', Arial, sans-serif; color: #777; font-size: 13px; line-height: 18px; }
  .scrollbar { width: 17px; background: #f1f1f1; display: flex; flex-direction: column; }
  .scrollbar svg { fill: #505050; flex: none; }
  .scrollbar i { height: 252px; margin: 40px 2px auto; background: #c1c1c1; }
  header { height: 75px; box-sizing: border-box; background: #183d4e; border-bottom: 1px solid #102c3a; overflow: hidden; font: 400 30px/30px Roboto, sans-serif; color: #b9c5cb; padding-left: 765px; }
  header span { display: block; margin-top: -24px; }

  .top-controls { height: 109px; box-sizing: border-box; display: flex; align-items: flex-start; padding: 31px 0 0 319px; box-shadow: inset 0 4px 4px -3px rgba(0, 0, 0, 0.25); }
  .top-controls svg { fill: #212121; }
  .reset { margin-top: 11px; }
  .play { margin: -5px 14px 0 15px; }
  .step { margin-top: 11px; }
  .epoch { width: 180px; margin-left: 54px; }
  .label { display: block; white-space: nowrap; }
  .epoch strong { display: block; font-weight: 400; font-size: 24px; line-height: 28px; margin-top: 3px; color: #212121; letter-spacing: -0.1px; }
  .select { margin-right: 30px; flex: none; }
  .value { margin-top: 12px; padding-bottom: 5px; border-bottom: 1px solid #ccc; color: #333; font-size: 14px; display: flex; justify-content: space-between; align-items: center; letter-spacing: -0.05px; }
  .value i { border: 4.5px solid transparent; border-top: 5px solid #8d8d8d; border-bottom: 0; margin-right: 5px; }

  main { height: 621px; box-sizing: border-box; background: #f7f7f7; border-top: 1px solid #dcdcdc; border-bottom: 1px solid #dedede; box-shadow: inset 0 4px 4px -3px rgba(0, 0, 0, 0.12); display: grid; grid-template-columns: 193px 752px 1fr; padding: 52px 0 0 315.5px; }
  h4 { margin: 1px 0 0; font: 300 16.5px/20px Roboto, sans-serif; color: #000; letter-spacing: -0.2px; }
  p { margin: 9px 0 0; }
  .thumbs { display: grid; grid-template-columns: 38px 38px; gap: 10px; margin-top: 20px; }
  .thumb { display: block; border-radius: 3px; opacity: 0.2; box-shadow: inset 0 0 0 2px #d5d5d5; }
  .thumb.selected { opacity: 1; background: #fff; box-shadow: inset 0 0 0 2px #000, 0 2px 4px rgba(0, 0, 0, 0.25); }
  .param { margin-top: 22px; line-height: 20px; }
  .thumbs + .param { margin-top: 21px; }
  .param span { display: block; }
  .slider { height: 16px; width: 120px; margin-left: 1px; background: linear-gradient(#b7b7b7, #b7b7b7) 0 7px / 100% 2px no-repeat; }
  .slider i { display: block; position: relative; height: 2px; top: 7px; background: #183d4e; }
  .slider i::after { content: ''; position: absolute; right: -6px; top: -5px; width: 12px; height: 12px; border-radius: 50%; background: #183d4e; }
  button { display: block; margin-top: 26px; width: 122px; height: 34px; border: 0; border-radius: 2px; background: #eee; color: #757575; font: 400 12px Roboto, sans-serif; }

  .network { position: relative; display: flex; }
  .features { width: 193px; }
  .hidden { width: 488px; margin-top: -5px; }
  .layers { display: flex; padding-left: 131px; }
  .layers h4 { margin: 3px 0 0 14px; }
  .layers span { margin-right: 11px; }
  .bracket { height: 5px; border: 1px solid #bbb; border-bottom: 0; margin-top: 13px; box-sizing: border-box; }
  .graph { position: absolute; left: 0; top: -53px; }
  .count { font-size: 12px; fill: #333; }
  .feature { font-size: 13px; fill: #444; text-anchor: end; }
  .small { font-size: 10px; }
  .callout { font-size: 11px; font-style: italic; fill: #777; }
  .callout path { fill: none; stroke: #777; stroke-width: 1; }
  .strong { font-weight: 700; }

  .loss { display: flex; height: 70px; margin-top: 9px; line-height: 20px; }
  .loss > div { width: 138px; }
  .loss span { display: block; }
  .loss .test { color: #111; }
  .loss svg { margin-top: 2px; }
  .heatmap { display: block; overflow: visible; }
  .axis { font-size: 29px; fill: #b9b9b9; stroke: none; }
  .axis path { stroke: #d0d0d0; stroke-width: 3; }
  .axis .zero { fill: #444; }
  .axis .zero path { stroke: #888; }
  .legend { display: flex; height: 54px; margin-top: 40px; }
  .legend p { margin: 0; width: 118px; }
  .scale { width: 144px; margin-top: 12px; }
  .bar { height: 10px; background: linear-gradient(90deg, #f59322, #e8eaeb, #0877bd); }
  .marks { display: flex; justify-content: space-between; }
  .marks i { width: 1px; height: 6px; background: #555; }
  .numbers { display: flex; justify-content: space-between; font-size: 10px; line-height: 19px; margin: 0 -3px; }
  .numbers span:nth-child(2) { margin-right: 3px; }
  .checks { display: flex; align-items: center; height: 16px; margin-top: 22px; padding-top: 1px; }
  .checks i { width: 12px; height: 12px; border: 2px solid #757575; border-radius: 2px; margin-right: 8px; }
  .checks span { width: 108px; white-space: nowrap; }
  .more-fab { position: absolute; left: 898px; top: 777px; width: 56px; height: 56px; border-radius: 50%; background: #fff; box-shadow: 0 1px 3px rgba(0, 0, 0, 0.25); display: flex; align-items: center; justify-content: center; }
  .more-fab path { fill: none; stroke: #111; stroke-width: 2; }

  .taskbar { height: 40px; background: #d5d5d5; display: flex; align-items: center; color: #111; font-size: 12px; }
  .start { width: 48px; display: flex; justify-content: center; }
  .search { width: 288px; height: 38px; background: #fff; border: 1px solid #c4c4c4; box-sizing: border-box; display: flex; align-items: center; padding-left: 11px; font-size: 15px; letter-spacing: -0.6px; color: #333; }
  .search > svg:first-child { fill: none; stroke: #222; stroke-width: 1.4; margin-right: 10px; }
  .search .art { margin-left: auto; }
  .grip { width: 2px; height: 16px; border: solid #222; border-width: 0 1px; margin: 0 13px 0 6px; }
  .apps { display: flex; height: 40px; gap: 1px; }
  .apps > div { width: 48px; display: flex; align-items: center; justify-content: center; box-sizing: border-box; }
  .apps > .running { background: linear-gradient(#0078d7, #0078d7) center bottom / 40px 2px no-repeat; }
  .apps > .current { background: linear-gradient(#0078d7, #0078d7) center bottom / 48px 2px no-repeat, #efefef; }
  .profile { position: relative; }
  .profile i { position: absolute; left: 11px; top: 11px; width: 14px; height: 14px; border-radius: 50%; background: #c9b2ab; }
  .tray { margin-left: auto; display: flex; align-items: center; padding-right: 17px; letter-spacing: -0.3px; }
  .battery { background: #149a45; border: 2px solid #fff; color: #fff; width: 45px; height: 16px; line-height: 16px; text-align: center; font-size: 13px; margin-right: 8px; }
  .line { fill: none; stroke: #111; stroke-width: 1.2; }
  .tray .up { margin-left: 13px; }
  .faint { stroke: #888; margin: 0 8px 0 12px; }
  .tray .plug { margin-left: 9px; }
  .lang { margin: 0 14px 0 9px; letter-spacing: -0.5px; }
  .clock { width: 60px; display: flex; flex-direction: column; align-items: center; line-height: 18px; white-space: nowrap; }
  .notice { position: relative; margin-left: 14px; width: 26px; height: 17px; }
  .notice em { position: absolute; left: 8px; top: 6px; width: 14px; height: 14px; border: 1px solid #444; border-radius: 50%; background: #ddd; font: 12px/14px 'Liberation Sans', sans-serif; text-align: center; }
</style>
